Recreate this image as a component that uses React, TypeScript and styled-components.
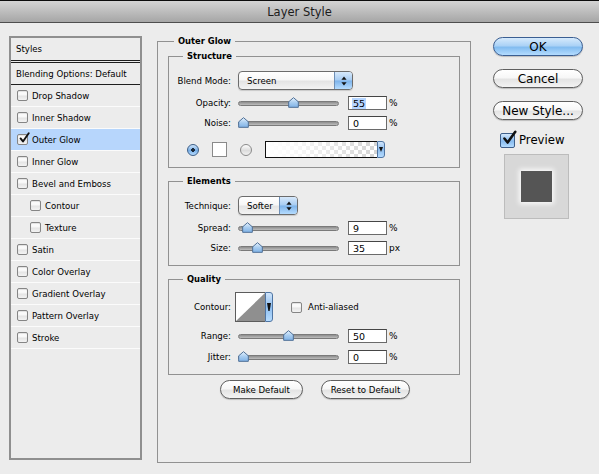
import styled, { createGlobalStyle, css } from 'styled-components';

const GlobalStyle = createGlobalStyle`
  html, body {
    margin: 0;
    padding: 0;
    background: #ececec;
  }
  body {
    font-family: "Lucida Grande", "DejaVu Sans", sans-serif;
    font-size: 8.6px;
    color: #000;
  }
`;

const STYLE_ITEMS = [
  { name: 'Drop Shadow' },
  { name: 'Inner Shadow' },
  { name: 'Outer Glow', checked: true, active: true },
  { name: 'Inner Glow' },
  { name: 'Bevel and Emboss' },
  { name: 'Contour', sub: true },
  { name: 'Texture', sub: true },
  { name: 'Satin' },
  { name: 'Color Overlay' },
  { name: 'Gradient Overlay' },
  { name: 'Pattern Overlay' },
  { name: 'Stroke' },
];

// slider thumbs sit on a 91px run (track 101px minus thumb)
function Slider({ pos }: { pos: number }) {
  return (
    <SliderWrap>
      <Track />
      <Thumb $pos={pos} viewBox="0 0 10 10">
        <defs>
          <linearGradient id="thumbFill" x1="0" y1="0" x2="0" y2="1">
            <stop offset="0" stopColor="#e6f2fd" />
            <stop offset="0.5" stopColor="#a9cdf0" />
            <stop offset="1" stopColor="#7fb2e6" />
          </linearGradient>
        </defs>
        <path d="M5 0.6 L9.4 4.4 V9.4 H0.6 V4.4 Z" fill="url(#thumbFill)" stroke="#4f6f96" strokeWidth="0.9" />
      </Thumb>
    </SliderWrap>
  );
}

function SliderRow({ label, pos, value, unit, selected }: { label: string; pos: number; value: string; unit: string; selected?: boolean }) {
  return (
    <Row>
      <Label>{label}</Label>
      <Slider pos={pos} />
      <NumberBox>
        <Value $selected={selected}>{value}</Value>
      </NumberBox>
      <Unit>{unit}</Unit>
    </Row>
  );
}

function CheckMark() {
  return (
    <CheckSvg viewBox="0 0 14 14">
      <path d="M3 7.5 L5.8 11 L12.5 1.5" fill="none" stroke="#111" strokeWidth="2.2" strokeLinecap="round" strokeLinejoin="round" />
    </CheckSvg>
  );
}

function Stepper() {
  return (
    <StepperBox>
      <svg width="6" height="10" viewBox="0 0 6 10">
        <path d="M3 0.5 L5.6 3.8 H0.4 Z" fill="#111" />
        <path d="M3 9.5 L5.6 6.2 H0.4 Z" fill="#111" />
      </svg>
    </StepperBox>
  );
}

export default function App() {
  return (
    <Window>
      <GlobalStyle />
      <TitleBar>Layer Style</TitleBar>
      <Body>
        <StyleList>
          <ListHeader>Styles</ListHeader>
          <BlendingRow>Blending Options: Default</BlendingRow>
          {STYLE_ITEMS.map((item) => (
            <ListRow key={item.name} $active={item.active} $sub={item.sub}>
              <Box>{item.checked && <CheckMark />}</Box>
              {item.name}
            </ListRow>
          ))}
        </StyleList>

        <MainGroup>
          <MainLegend>Outer Glow</MainLegend>

          <Group>
            <GroupLegend>Structure</GroupLegend>
            <Rows $top={8} $bottom={9} $gap={6}>
              <Row>
                <Label>Blend Mode:</Label>
                <Select $width={115}>
                  <SelectText>Screen</SelectText>
                  <Stepper />
                </Select>
              </Row>
              <SliderRow label="Opacity:" pos={0.55} value="55" unit="%" selected />
              <SliderRow label="Noise:" pos={0} value="0" unit="%" />
              <ColorRow>
                <Radio $on />
                <Swatch />
                <Radio />
                <GradientPick>
                  <GradientFill />
                  <ArrowTab>
                    <svg width="4" height="5" viewBox="0 0 4 5">
                      <path d="M0 0 H4 L2 5 Z" fill="#111" />
                    </svg>
                  </ArrowTab>
                </GradientPick>
              </ColorRow>
            </Rows>
          </Group>

          <Group>
            <GroupLegend>Elements</GroupLegend>
            <Rows $top={8} $bottom={10} $gap={6}>
              <Row>
                <Label>Technique:</Label>
                <Select $width={60}>
                  <SelectText>Softer</SelectText>
                  <Stepper />
                </Select>
              </Row>
              <SliderRow label="Spread:" pos={0.045} value="9" unit="%" />
              <SliderRow label="Size:" pos={0.15} value="35" unit="px" />
            </Rows>
          </Group>

          <Group>
            <GroupLegend>Quality</GroupLegend>
            <Rows $top={6} $bottom={10} $gap={7}>
              <Row>
                <Label>Contour:</Label>
                <ContourPick>
                  <ContourCurve viewBox="0 0 30 28" preserveAspectRatio="none">
                    <path d="M0 28 L30 0 V28 Z" fill="#8f8f8f" />
                  </ContourCurve>
                  <ArrowTab>
                    <svg width="4" height="8" viewBox="0 0 4 8">
                      <path d="M0 0 H4 L2.6 8 H1.4 Z" fill="#111" />
                    </svg>
                  </ArrowTab>
                </ContourPick>
                <AntiAlias>
                  <Box />
                  Anti-aliased
                </AntiAlias>
              </Row>
              <SliderRow label="Range:" pos={0.49} value="50" unit="%" />
              <SliderRow label="Jitter:" pos={0} value="0" unit="%" />
            </Rows>
          </Group>

          <ButtonRow>
            <SmallButton $width={83}>Make Default</SmallButton>
            <SmallButton $width={89}>Reset to Default</SmallButton>
          </ButtonRow>
        </MainGroup>

        <Side>
          <PushButton $primary>OK</PushButton>
          <PushButton>Cancel</PushButton>
          <PushButton>New Style...</PushButton>
          <PreviewToggle>
            <BigBox>
              <CheckMark />
            </BigBox>
            Preview
          </PreviewToggle>
          <PreviewWell>
            <PreviewSquare />
          </PreviewWell>
        </Side>
      </Body>
    </Window>
  );
}

//styles

const aquaWhite = css`
  background: linear-gradient(#ffffff 0%, #f7f7f7 45%, #e4e4e4 55%, #f3f3f3 100%);
`;

const Window = styled.div`
  width: 599px;
  height: 474px;
  overflow: hidden;
  background: #ececec;
`;

const TitleBar = styled.div`
  height: 21px;
  border-top: 1px solid #0c0c0c;
  border-bottom: 1px solid #4e4e4e;
  background: linear-gradient(#d4d4d4, #a6a6a6);
  display: flex;
  align-items: center;
  justify-content: center;
  font-size: 11.5px;
  color: #1c1c1c;
`;

const Body = styled.div`
  display: flex;
  align-items: flex-start;
  padding: 11px 0 0 9px;
`;

const StyleList = styled.div`
  width: 133px;
  height: 424px;
  margin-top: 2px;
  margin-right: 15px;
  box-sizing: border-box;
  border: 2px solid #8f8f8f;
  display: flex;
  flex-direction: column;
`;

const ListHeader = styled.div`
  height: 22px;
  padding-left: 5px;
  display: flex;
  align-items: center;
  border-bottom: 3px double #1e1e1e;
`;

const BlendingRow = styled.div`
  height: 21px;
  padding-left: 5px;
  display: flex;
  align-items: center;
  white-space: nowrap;
  border-bottom: 1px solid #1e1e1e;
`;

const ListRow = styled.div<{ $active?: boolean; $sub?: boolean }>`
  height: 21px;
  flex-shrink: 0;
  display: flex;
  align-items: center;
  gap: 4px;
  padding-left: ${(p) => (p.$sub ? 19 : 6)}px;
  border-bottom: 1px solid #fbfbfb;
  background: ${(p) => (p.$active ? '#b7d6fc' : 'transparent')};
`;

const Box = styled.span`
  position: relative;
  width: 11px;
  height: 11px;
  box-sizing: border-box;
  border: 1px solid #858585;
  border-radius: 2px;
  ${aquaWhite};
  box-shadow: inset 0 1px 1px rgba(0, 0, 0, 0.12);
  flex-shrink: 0;
`;

const CheckSvg = styled.svg`
  position: absolute;
  left: 0;
  top: -3px;
  width: 12px;
  height: 12px;
`;

const MainGroup = styled.fieldset`
  width: 314px;
  height: 429px;
  box-sizing: border-box;
  margin: 0 22px 0 0;
  padding: 0 10px;
  min-width: 0;
  border: 1px solid #919191;
`;

const MainLegend = styled.legend`
  margin-left: 6px;
  padding: 0 4px;
  line-height: 14px;
  font-weight: bold;
  font-size: 8.4px;
`;

const Group = styled.fieldset`
  margin: 1px 0 6px;
  padding: 0;
  min-width: 0;
  border: 1px solid #919191;
`;

const GroupLegend = styled.legend`
  margin-left: 14px;
  padding: 0 4px;
  line-height: 14px;
  font-weight: bold;
  font-size: 8.4px;
`;

const Rows = styled.div<{ $top: number; $bottom: number; $gap: number }>`
  display: flex;
  flex-direction: column;
  gap: ${(p) => p.$gap}px;
  padding: ${(p) => p.$top}px 0 ${(p) => p.$bottom}px;
`;

const Row = styled.div`
  display: flex;
  align-items: center;
`;

const Label = styled.span`
  width: 62px;
  margin-right: 7px;
  text-align: right;
  white-space: nowrap;
  line-height: 10px;
`;

const Select = styled.div<{ $width: number }>`
  width: ${(p) => p.$width}px;
  height: 19px;
  box-sizing: border-box;
  border: 1px solid #6c6c6c;
  border-radius: 4px;
  ${aquaWhite};
  display: flex;
  align-items: center;
  overflow: hidden;
  box-shadow: 0 1px 1px rgba(0, 0, 0, 0.15);
`;

const SelectText = styled.span`
  flex: 1;
  padding-left: 8px;
`;

const StepperBox = styled.span`
  width: 17px;
  align-self: stretch;
  display: flex;
  align-items: center;
  justify-content: center;
  border-left: 1px solid #6e8fb6;
  background: linear-gradient(#d7e9fb 0%, #a7ccf2 48%, #7db3ea 52%, #b5dcff 100%);
`;

const SliderWrap = styled.span`
  position: relative;
  width: 101px;
  height: 14px;
  margin-right: 9px;
  display: flex;
  align-items: center;
`;

const Track = styled.span`
  width: 100%;
  height: 5px;
  box-sizing: border-box;
  border-radius: 3px;
  border: 1px solid #7a7a7a;
  background: linear-gradient(#8d8d8d, #bdbdbd);
`;

const Thumb = styled.svg<{ $pos: number }>`
  position: absolute;
  top: 1px;
  left: ${(p) => p.$pos * 91}px;
  width: 11px;
  height: 11px;
`;

const NumberBox = styled.span`
  width: 39px;
  height: 14px;
  box-sizing: border-box;
  border: 1px solid #6a6a6a;
  border-top-color: #454545;
  background: #fff;
  display: flex;
  align-items: center;
  padding-left: 3px;
  font-size: 9.5px;
`;

const Value = styled.span<{ $selected?: boolean }>`
  background: ${(p) => (p.$selected ? '#b5d5ff' : 'transparent')};
  padding: 0 1px;
  line-height: 11px;
`;

const Unit = styled.span`
  margin-left: 2px;
  font-size: 9px;
  line-height: 10px;
`;

const ColorRow = styled.div`
  display: flex;
  align-items: center;
  gap: 13px;
  padding-left: 18px;
  margin-top: 5px;
  height: 17px;
`;

const Radio = styled.span<{ $on?: boolean }>`
  position: relative;
  width: 12px;
  height: 12px;
  box-sizing: border-box;
  border-radius: 50%;
  border: 1px solid ${(p) => (p.$on ? '#3d5f88' : '#8a8a8a')};
  background: ${(p) =>
    p.$on
      ? 'radial-gradient(circle at 50% 50%, #1c2a3a 0 1.6px, transparent 2px), linear-gradient(#cfe4fa, #77aee6 55%, #b7dcff)'
      : 'linear-gradient(#fdfdfd, #dcdcdc 55%, #f1f1f1)'};
`;

const Swatch = styled.span`
  width: 15px;
  height: 15px;
  box-sizing: border-box;
  border: 1px solid #8a8a8a;
  background: #fff;
`;

const GradientPick = styled.span`
  display: flex;
  height: 17px;
`;

const GradientFill = styled.span`
  width: 112px;
  box-sizing: border-box;
  border: 1px solid #111;
  border-right: none;
  background:
    linear-gradient(to right, #fff 0%, rgba(255, 255, 255, 0.85) 25%, rgba(255, 255, 255, 0) 100%),
    repeating-conic-gradient(#d4d4d4 0 25%, #fff 0 50%) 0 0 / 8px 8px;
`;

const ArrowTab = styled.span`
  width: 8px;
  box-sizing: border-box;
  border: 1px solid #4f75a3;
  border-radius: 0 3px 3px 0;
  background: linear-gradient(#d0e5fb, #8ebdee 50%, #b6dcff);
  display: flex;
  align-items: center;
  justify-content: center;
`;

const ContourPick = styled.span`
  display: flex;
  height: 30px;
  margin-left: -3px;
`;

const ContourCurve = styled.svg`
  width: 30px;
  height: 30px;
  box-sizing: border-box;
  border: 1px solid #5c5c5c;
  border-right: none;
  background: #fff;
`;

const AntiAlias = styled.span`
  display: flex;
  align-items: center;
  gap: 6px;
  margin-left: 18px;
  font-size: 8.6px;
`;

const ButtonRow = styled.div`
  display: flex;
  justify-content: center;
  gap: 18px;
  margin-top: -1px;
  padding-left: 2px;
`;

const SmallButton = styled.div<{ $width: number }>`
  width: ${(p) => p.$width}px;
  height: 19px;
  box-sizing: border-box;
  border: 1px solid #5f5f5f;
  border-radius: 10px;
  ${aquaWhite};
  display: flex;
  align-items: center;
  justify-content: center;
  box-shadow: 0 1px 1px rgba(0, 0, 0, 0.2);
`;

const Side = styled.div`
  width: 90px;
  margin-top: 3px;
  display: flex;
  flex-direction: column;
  gap: 13px;
`;

const PushButton = styled.div<{ $primary?: boolean }>`
  height: 19px;
  box-sizing: border-box;
  border-radius: 10px;
  border: 1px solid ${(p) => (p.$primary ? '#3a5e92' : '#5f5f5f')};
  background: ${(p) =>
    p.$primary
      ? 'linear-gradient(#d6eafc 0%, #abd2f6 45%, #82bcf0 55%, #b4dcff 100%)'
      : 'linear-gradient(#ffffff 0%, #f7f7f7 45%, #e4e4e4 55%, #f3f3f3 100%)'};
  display: flex;
  align-items: center;
  justify-content: center;
  font-size: 12px;
  box-shadow: 0 1px 1px rgba(0, 0, 0, 0.2);
`;

const PreviewToggle = styled.div`
  display: flex;
  align-items: center;
  gap: 4px;
  padding-left: 7px;
  font-size: 11.7px;
  margin-top: -1px;
  height: 16px;
`;

const BigBox = styled.span`
  position: relative;
  width: 15px;
  height: 15px;
  box-sizing: border-box;
  border: 1px solid #3e5f8a;
  border-radius: 2px;
  background: linear-gradient(#d3e7fb, #87bbef 55%, #b3dbff);

  svg {
    width: 16px;
    height: 16px;
    top: -4px;
    left: 0;
  }
`;

const PreviewWell = styled.div`
  width: 65px;
  height: 65px;
  box-sizing: border-box;
  margin: -7px 0 0 11px;
  border: 1px solid #bcbcbc;
  background: #d8d8d8;
  display: flex;
  align-items: center;
  justify-content: center;
`;

const PreviewSquare = styled.div`
  width: 31px;
  height: 31px;
  background: #555;
  box-shadow: 0 0 5px 2px rgba(255, 255, 255, 0.85);
`;
